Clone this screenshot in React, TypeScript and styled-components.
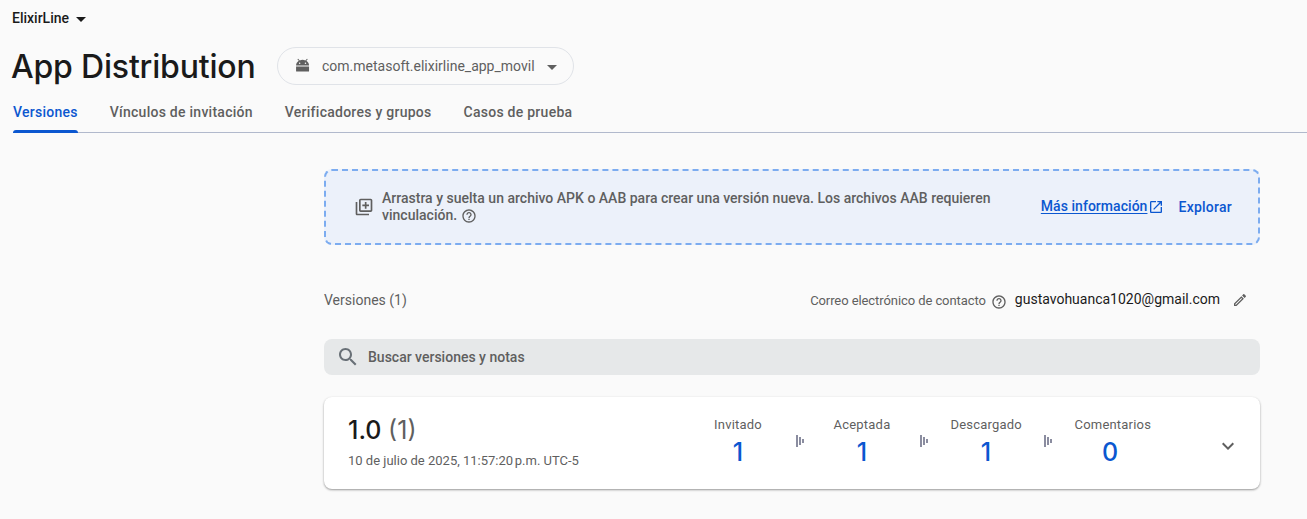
import React from 'react';
import styled, { createGlobalStyle } from 'styled-components';

const Global = createGlobalStyle`
  * { box-sizing: border-box; }
  body { margin: 0; background: #fafafa; font-family: Roboto, sans-serif; color: #1a1a1a; }
  svg { display: block; flex: none; }
`;

const Page = styled.div`
  height: 519px;
  overflow: hidden;
`;

const Project = styled.div`
  display: flex;
  align-items: center;
  gap: 7px;
  height: 20px;
  margin: 8px 0 0 12px;
  font-size: 14px;
  font-weight: 500;
  line-height: 20px;
`;

const Caret = styled.span<{ $top?: number }>`
  margin-top: ${p => p.$top ?? 0}px;
  border: 5px solid transparent;
  border-top-color: currentColor;
  border-bottom: 0;
`;

const TitleRow = styled.div`
  display: flex;
  align-items: center;
  height: 38px;
  margin: 19px 0 0 11px;
`;

const Title = styled.h1`
  width: 266px;
  margin: 0;
  padding-top: 1px;
  font: 450 32px/40px Inter, sans-serif;
  letter-spacing: -0.18px;
  white-space: nowrap;
`;

const AppPicker = styled.button`
  display: flex;
  align-items: center;
  width: 297px;
  height: 38px;
  padding: 0 16px 0 17px;
  border: 1px solid #e0e3e8;
  border-radius: 19px;
  background: transparent;
  color: #5f5f5f;
  font: 400 14px/20px Roboto, sans-serif;

  span:first-of-type { flex: 1; margin-left: 11px; text-align: left; white-space: nowrap; }
`;

const Tabs = styled.nav`
  display: flex;
  gap: 32px;
  height: 41px;
  margin: 7px 0 0 13px;
  border-bottom: 1px solid #b1b9cc;
`;

const Tab = styled.a<{ $active?: boolean }>`
  display: flex;
  flex-direction: column;
  height: 41px;
  padding-top: 10px;
  color: ${p => (p.$active ? '#0b57d0' : '#5f5f5f')};
  font-size: 14px;
  font-weight: 500;
  line-height: 20px;
  letter-spacing: 0.26px;
  white-space: nowrap;

  &::after {
    content: '';
    height: 3px;
    margin-top: auto;
    border-radius: 3px 3px 0 0;
    background: ${p => (p.$active ? '#0b57d0' : 'transparent')};
  }
`;

const Content = styled.main`
  width: 936px;
  margin: 36px 0 0 324px;
`;

const DropZone = styled.section`
  display: flex;
  align-items: center;
  height: 76px;
  padding: 0 26px 0 28px;
  border: 2px dashed #7cacf0;
  border-radius: 8px;
  background: #ecf1fa;
  color: #5f5f5f;
  font-size: 14px;
  font-weight: 500;
  line-height: 17px;
`;

const DropText = styled.p`
  flex: 1;
  margin: 0 0 0 8px;
  letter-spacing: 0.01px;
  svg { display: inline-block; vertical-align: -4px; }
`;

const DocLink = styled.a`
  display: flex;
  align-items: center;
  gap: 1px;
  margin-right: 14px;
  color: #0b57d0;
  letter-spacing: 0.04px;
  span { margin-top: -2px; text-decoration: underline; text-underline-offset: 2px; }
`;

const Browse = styled.button`
  padding: 1px 0 0;
  border: 0;
  background: none;
  color: #0b57d0;
  font: 500 14px/17px Roboto, sans-serif;
  letter-spacing: 0.25px;
`;

const ListHeader = styled.div`
  display: flex;
  align-items: center;
  height: 20px;
  margin-top: 45px;
  color: #5f5f5f;
  font-size: 14px;
  line-height: 20px;
`;

const Contact = styled.div`
  display: flex;
  align-items: center;
  gap: 5px;
  margin: 0 12px 0 auto;
  font-size: 13px;
  letter-spacing: -0.08px;
  svg { margin-top: 3px; }
  svg:last-child { margin: 0 0 0 7px; }
`;

const ContactLabel = styled.span`
  padding-top: 1px;
`;

const Email = styled.span`
  margin: -2px 0 0 3px;
  color: #1a1a1a;
  font-size: 14px;
  letter-spacing: 0;
`;

const Search = styled.div`
  display: flex;
  align-items: center;
  gap: 8px;
  height: 36px;
  margin-top: 29px;
  padding-left: 12px;
  border-radius: 8px;
  background: #e6e8e9;
  color: #5f5f5f;
  font-size: 14px;
  font-weight: 500;
`;

const Card = styled.article`
  display: flex;
  height: 92px;
  margin-top: 22px;
  padding: 0 20px 0 24px;
  border-radius: 8px;
  background: #fff;
  box-shadow: 0 1px 2px rgba(0, 0, 0, 0.3), 0 1px 3px rgba(0, 0, 0, 0.12);
`;

const Release = styled.div`
  width: 328px;
  padding-top: 17px;
`;

const Version = styled.h2`
  margin: 0;
  font: 500 25px/32px Inter, sans-serif;
  span { color: #5f5f5f; font-weight: 400; }
`;

const Stamp = styled.div`
  margin-top: 5px;
  color: #5f5f5f;
  font-size: 13px;
  line-height: 20px;
  white-space: nowrap;
`;

const Stats = styled.div`
  display: flex;
`;

const Stat = styled.div`
  display: flex;
  flex-direction: column;
  align-items: center;
  width: 124px;
  padding-top: 18px;
  color: #5f5f5f;
  font-size: 13px;
  line-height: 20px;
  letter-spacing: 0.2px;

  strong { margin-top: 1px; color: #0b57d0; font: 500 25px/32px Inter, sans-serif; letter-spacing: 0; }
`;

const StatLabel = styled.span`
  width: 71px;
  text-align: center;
  white-space: nowrap;
`;

const Funnel = styled.div`
  display: flex;
  align-items: center;
  gap: 1px;
  width: 8px;
  height: 12px;
  margin: 38px -4px 0;
`;

const Bar = styled.i<{ $h: number }>`
  width: 2px;
  height: ${p => p.$h}px;
  background: #8b8da0;
`;

const Expand = styled.div`
  margin: 37px 0 0 auto;
`;

type IconProps = { d: string; size: number; color?: string };
const Icon = ({ d, size, color = '#5f5f5f' }: IconProps) => (
  <svg width={size} height={size} viewBox="0 0 24 24" fill={color}>
    <path d={d} />
  </svg>
);

const AndroidIcon = () => (
  <svg width="16" height="16" viewBox="1 0.4 14.8 14.8" fill="#5f5f5f">
    <path
      fillRule="evenodd"
      d="M2 7.3C2 5.5 3 4 4.5 3L3.2 1.6l.7-.6 1.5 1.6a6.3 6.3 0 0 1 5.2 0L12.1 1l.7.6L11.5 3C13 4 14 5.5 14 7.3zM5.3 4.6a.7.7 0 1 0 0 1.4.7.7 0 1 0 0-1.4zM10.7 4.6a.7.7 0 1 0 0 1.4.7.7 0 1 0 0-1.4zM2 8.2h12V12.5a.5.5 0 0 1-.5.5H2.500a.5.5 0 0 1-.5-.5z"
    />
  </svg>
);

const HELP =
  'M11 18h2v-2h-2v2zm1-16C6.48 2 2 6.48 2 12s4.48 10 10 10 10-4.48 10-10S17.52 2 12 2zm0 18c-4.41 0-8-3.59-8-8s3.59-8 8-8 8 3.59 8 8-3.59 8-8 8zm0-14c-2.21 0-4 1.79-4 4h2c0-1.1.9-2 2-2s2 .9 2 2c0 2-3 1.75-3 5h2c0-2.25 3-2.5 3-5 0-2.21-1.79-4-4-4z';
const LIBRARY_ADD =
  'M4 6H2v14c0 1.1.9 2 2 2h14v-2H4V6zm16-4H8c-1.1 0-2 .9-2 2v12c0 1.1.9 2 2 2h12c1.1 0 2-.9 2-2V4c0-1.1-.9-2-2-2zm0 14H8V4h12v12zm-7-2h2v-3h3V9h-3V6h-2v3h-3v2h3v3z';
const OPEN_NEW =
  'M19 19H5V5h7V3H5c-1.11 0-2 .9-2 2v14c0 1.1.89 2 2 2h14c1.1 0 2-.9 2-2v-7h-2v7zM14 3v2h3.59l-9.83 9.83 1.41 1.41L19 6.41V10h2V3h-7z';
const PENCIL =
  'M14.06 9.02l.92.92L5.92 19H5v-.92l9.06-9.06M17.66 3c-.25 0-.51.1-.7.29l-1.83 1.83 3.75 3.75 1.83-1.83c.39-.39.39-1.02 0-1.41l-2.34-2.34c-.2-.2-.45-.29-.71-.29zm-3.6 3.19L3 17.25V21h3.75L17.81 9.94l-3.75-3.75z';
const SEARCH =
  'M15.5 14h-.79l-.28-.27C15.41 12.59 16 11.11 16 9.5 16 5.91 13.09 3 9.5 3S3 5.91 3 9.5 5.91 16 9.5 16c1.61 0 3.09-.59 4.23-1.57l.27.28v.79l5 4.99L20.49 19l-4.99-5zm-6 0C7.01 14 5 11.99 5 9.5S7.01 5 9.5 5 14 7.01 14 9.5 11.99 14 9.5 14z';
const CHEVRON = 'M7.41 8.59L12 13.17l4.59-4.58L18 10l-6 6-6-6 1.41-1.41z';

const tabs = ['Versiones', 'Vínculos de invitación', 'Verificadores y grupos', 'Casos de prueba'];
const stats: [string, number][] = [
  ['Invitado', 1],
  ['Aceptada', 1],
  ['Descargado', 1],
  ['Comentarios', 0],
];

export default function App() {
  return (
    <Page>
      <Global />
      <Project>
        ElixirLine <Caret $top={2} />
      </Project>
      <TitleRow>
        <Title>App Distribution</Title>
        <AppPicker>
          <AndroidIcon />
          <span>com.metasoft.elixirline_app_movil</span>
          <Caret $top={3} />
        </AppPicker>
      </TitleRow>
      <Tabs>
        {tabs.map((t, i) => (
          <Tab key={t} $active={i === 0}>{t}</Tab>
        ))}
      </Tabs>
      <Content>
        <DropZone>
          <Icon d={LIBRARY_ADD} size={20} />
          <DropText>
            Arrastra y suelta un archivo APK o AAB para crear una versión nueva. Los archivos AAB requieren
            <br />
            vinculación. <Icon d={HELP} size={16} />
          </DropText>
          <DocLink>
            <span>Más información</span>
            <Icon d={OPEN_NEW} size={16} color="#0b57d0" />
          </DocLink>
          <Browse>Explorar</Browse>
        </DropZone>
        <ListHeader>
          Versiones (1)
          <Contact>
            <ContactLabel>Correo electrónico de contacto</ContactLabel>
            <Icon d={HELP} size={16} />
            <Email>gustavohuanca1020@gmail.com</Email>
            <Icon d={PENCIL} size={16} />
          </Contact>
        </ListHeader>
        <Search>
          <Icon d={SEARCH} size={24} color="#697077" />
          Buscar versiones y notas
        </Search>
        <Card>
          <Release>
            <Version>
              1.0 <span>(1)</span>
            </Version>
            <Stamp>10 de julio de 2025, 11:57:20{'\u202f'}p.m. UTC-5</Stamp>
          </Release>
          <Stats>
            {stats.map(([label, value], i) => (
              <React.Fragment key={label}>
                {i > 0 && (
                  <Funnel>
                    <Bar $h={12} />
                    <Bar $h={8} />
                    <Bar $h={4} />
                  </Funnel>
                )}
                <Stat>
                  <StatLabel>{label}</StatLabel>
                  <strong>{value}</strong>
                </Stat>
              </React.Fragment>
            ))}
          </Stats>
          <Expand>
            <Icon d={CHEVRON} size={24} />
          </Expand>
        </Card>
      </Content>
    </Page>
  );
}
